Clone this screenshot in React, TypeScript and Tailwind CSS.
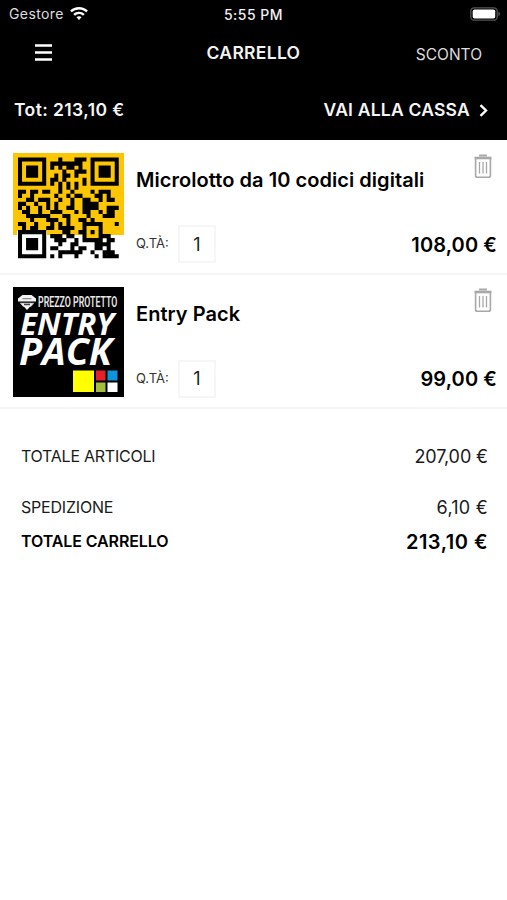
import type { ReactNode } from "react";

const QR_ROWS = [
  "#######...#...###.#######",
  "#.....#.########..#.....#",
  "#.###.#.#.#.##.#..#.###.#",
  "#.###.#....#..###.#.###.#",
  "#.###.#..#.##.#...#.###.#",
  "#.....#.##.#....#.#.....#",
  "#######.#.#.#.#.#.#######",
  "..........#.#.#..........",
  "##.##.##..#..#....#.###..",
  "#..#.....#..#.##...##.#..",
  "..##.###..#..#..##..#.##.",
  "##..#..#.#...#..####.....",
  "#.#..#.#.#..##..####..###",
  ".##..#..###...#.##..#.##.",
  "..######...##....#...###.",
  "...#...###..#..##.#......",
  "##..#...#.#.#...#####...#",
  ".#.##..##.####..#...#....",
  "#######....##..##.#.#....",
  "#.....#.###.##..#...###..",
  "#.###.#..###..#.#####.##.",
  "#.###.#...#..##....####..",
  "#.###.#.##...#.##..##.#..",
  "#.....#...######..#..###.",
  "#######.#.#...#....#.####",
];

// merge neighbouring cells into runs, so no seams show between them
const QR_PATH = QR_ROWS.map((row, y) =>
  Array.from(row.matchAll(/#+/g))
    .map((run) => `M${run.index} ${y}h${run[0].length}v1.02h-${run[0].length}z`)
    .join("")
).join("");

function QrCode() {
  return (
    <svg viewBox="0 0 111 108" className="h-[108px] w-[111px] shrink-0">
      <rect width="111" height="82" fill="#fdc602" />
      <rect y="82" width="111" height="26" fill="#fff" />
      <path d="M4 78h30v30H4z" fill="#fff" />
      <path d="M70 69h20v20H70z" fill="#fdc602" />
      <path d={QR_PATH} transform="translate(5 4.500) scale(4.03)" />
    </svg>
  );
}

function EntryPackCover() {
  return (
    <svg viewBox="0 0 111 110" className="h-[110px] w-[111px] shrink-0">
      <rect width="111" height="110" fill="#000" />
      <path d="M9.500 8h9l4.500 3.500v3H5v-3z" fill="#f2f2f2" />
      <path d="M9.500 11.700h9" stroke="#777" strokeWidth="1" />
      <path d="M6.500 15.700h15l-3.500 4H10z" fill="#bbb" />
      <path d="M8 16.500h12l-6 6.500z" fill="#f2f2f2" />
      <path d="M11 17.500h6" stroke="#444" strokeWidth="1.500" />
      <text
        x="38"
        y="20"
        textLength="120"
        lengthAdjust="spacingAndGlyphs"
        transform="scale(.66 1)"
        className="fill-[#e8e8e8] font-['Roboto'] text-[14.500px] font-semibold"
      >
        PREZZO PROTETTO
      </text>
      <text
        x="7"
        y="48"
        textLength="94"
        lengthAdjust="spacingAndGlyphs"
        className="fill-white font-['Open_Sans'] text-[30px] font-bold italic"
      >
        ENTRY
      </text>
      <text
        x="6"
        y="78"
        textLength="93"
        lengthAdjust="spacingAndGlyphs"
        className="fill-white font-['Open_Sans'] text-[37px] font-bold italic"
      >
        PACK
      </text>
      <rect x="60" y="83.500" width="21" height="21.500" fill="#ffff00" />
      <rect x="83" y="83.500" width="9.500" height="10" fill="#e5202a" />
      <rect x="94.500" y="83.500" width="10" height="10" fill="#0d94dd" />
      <rect x="83" y="95.500" width="9.500" height="9.500" fill="#a2bf3a" />
      <rect x="94.500" y="95.500" width="10" height="9.500" fill="#fff" />
    </svg>
  );
}

function TrashIcon() {
  return (
    <svg
      viewBox="0 0 18 25"
      className="h-[25px] w-[18px]"
      fill="none"
      stroke="#a8a8a8"
    >
      <path d="M6 2.500V1.500h6v1" strokeWidth="1.800" />
      <path d="M.5 4h17" strokeWidth="2.600" />
      <path d="M1.600 5v16.500a1.800 1.800 0 0 0 1.800 1.800h11.200a1.800 1.800 0 0 0 1.800-1.800V5" strokeWidth="1.600" />
      <path d="M5.500 8v11.500M9 8v11.500M12.500 8v11.500" strokeWidth="1.300" />
    </svg>
  );
}

type CartItemProps = {
  name: string;
  price: string;
  cover: ReactNode;
};

function CartItem({ name, price, cover }: CartItemProps) {
  return (
    <li className="flex h-[134.500px] border-b-2 border-[#f5f5f5] pt-[12.500px] pl-[13px]">
      {cover}
      <div className="flex flex-1 flex-col pr-[10px] pl-3">
        <div className="flex h-[58px] justify-between">
          <h2 className="pt-[12px] text-[20px] leading-[30px] font-semibold tracking-[0.050px]">
            {name}
          </h2>
          <button className="mt-[1px] mr-[5px] h-[25px]" aria-label="Elimina">
            <TrashIcon />
          </button>
        </div>
        <div className="mt-[14.500px] flex h-[38px] items-center">
          <span className="w-[42px] text-[13px] text-[#333]">Q.TÀ:</span>
          <span className="flex h-[38px] w-[38px] items-center justify-center border-2 border-[#f6f6f6] text-[18px] text-[#222]">
            1
          </span>
          <span className="ml-auto pt-px text-[20px] font-semibold tracking-[0.100px]">{price}</span>
        </div>
      </div>
    </li>
  );
}

export default function App() {
  return (
    <div className="h-[900px] w-[507px] overflow-hidden bg-white font-['Inter',sans-serif] text-black">
      <header className="h-[140px] bg-black text-white">
        <div className="grid h-[27px] grid-cols-3 items-center pr-[6px] pl-[9px]">
          <div className="flex items-center gap-[6px] text-[14px] tracking-[0.4px] text-[#ddd]">
            Gestore
            <svg viewBox="0 0 18 14" className="h-[14px] w-[18px]" fill="#fff">
              <path d="M9 0C5.500 0 2.400 1.400.1 3.600l1.600 1.700A10.500 10.500 0 0 1 9 2.400c2.800 0 5.400 1.100 7.300 2.900l1.600-1.700A13 13 0 0 0 9 0z" />
              <path d="M9 4.700c-2.200 0-4.200.9-5.700 2.300l1.700 1.700A5.900 5.900 0 0 1 9 7.100c1.500 0 2.900.6 4 1.600L14.700 7A8.200 8.200 0 0 0 9 4.700z" />
              <path d="M9 9.300c-1 0-1.800.4-2.500 1L9 13l2.500-2.700c-.7-.6-1.500-1-2.500-1z" />
            </svg>
          </div>
          <div className="pt-px pr-[3px] text-center text-[14px] font-medium tracking-[0.5px] whitespace-nowrap text-[#f2f2f2]">
            5:55 PM
          </div>
          <svg viewBox="0 0 31 14" className="h-[14px] w-[31px] justify-self-end">
            <rect x=".8" y=".8" width="26.400" height="12.400" rx="3.500" fill="none" stroke="#555" strokeWidth="1.300" />
            <rect x="2.700" y="2.500" width="22.500" height="9" rx="1.800" fill="#fff" />
            <path d="M28.500 4.800c1.800.6 1.800 3.800 0 4.400z" fill="#666" />
          </svg>
        </div>
        <nav className="grid h-[52px] grid-cols-3 items-center">
          <svg viewBox="0 0 17 19" className="mt-[-1px] ml-[35px] h-[19px] w-[17px]" stroke="#fff" strokeWidth="2.300">
            <path d="M0 2.500h17M0 9.500h17M0 16.500h17" />
          </svg>
          <h1 className="pt-px text-center text-[17.500px] font-semibold tracking-[0.3px] text-[#f2f2f2]">
            CARRELLO
          </h1>
          <button className="mr-[25px] pt-[3px] text-right text-[15.500px] text-[#ddd]">
            SCONTO
          </button>
        </nav>
        <div className="flex h-[61px] items-center justify-between pt-[2px] pr-[19px] pl-[14px] text-[17.500px] font-semibold text-[#f5f5f5]">
          <span className="tracking-[0.400px]">Tot: 213,10 €</span>
          <button className="flex items-center gap-[9px] tracking-[0.220px]">
            VAI ALLA CASSA
            <svg viewBox="0 0 9 13" className="h-[13px] w-[9px]" fill="none" stroke="#fff" strokeWidth="2.400">
              <path d="M1.500 1.200 7 6.500l-5.500 5.300" />
            </svg>
          </button>
        </div>
      </header>

      <ul>
        <CartItem name="Microlotto da 10 codici digitali" price="108,00 €" cover={<QrCode />} />
        <CartItem name="Entry Pack" price="99,00 €" cover={<EntryPackCover />} />
      </ul>

      <dl className="pt-[29.500px] pr-[19px] pl-[21px]">
        <div className="flex h-[34px] items-center justify-between">
          <dt className="text-[16px] tracking-[-0.250px] text-[#1a1a1a]">TOTALE ARTICOLI</dt>
          <dd className="pt-px text-[18px] tracking-[-0.100px] text-[#1a1a1a]">207,00 €</dd>
        </div>
        <div className="mt-[17.500px] flex h-[34px] items-center justify-between">
          <dt className="text-[16px] tracking-[-0.200px] text-[#1a1a1a]">SPEDIZIONE</dt>
          <dd className="pt-px text-[18px] tracking-[0.250px] text-[#1a1a1a]">6,10 €</dd>
        </div>
        <div className="flex h-[34px] items-center justify-between">
          <dt className="text-[16px] font-semibold tracking-[-0.100px]">TOTALE CARRELLO</dt>
          <dd className="pt-px text-[20px] font-semibold tracking-[0.500px]">213,10 €</dd>
        </div>
      </dl>
    </div>
  );
}
